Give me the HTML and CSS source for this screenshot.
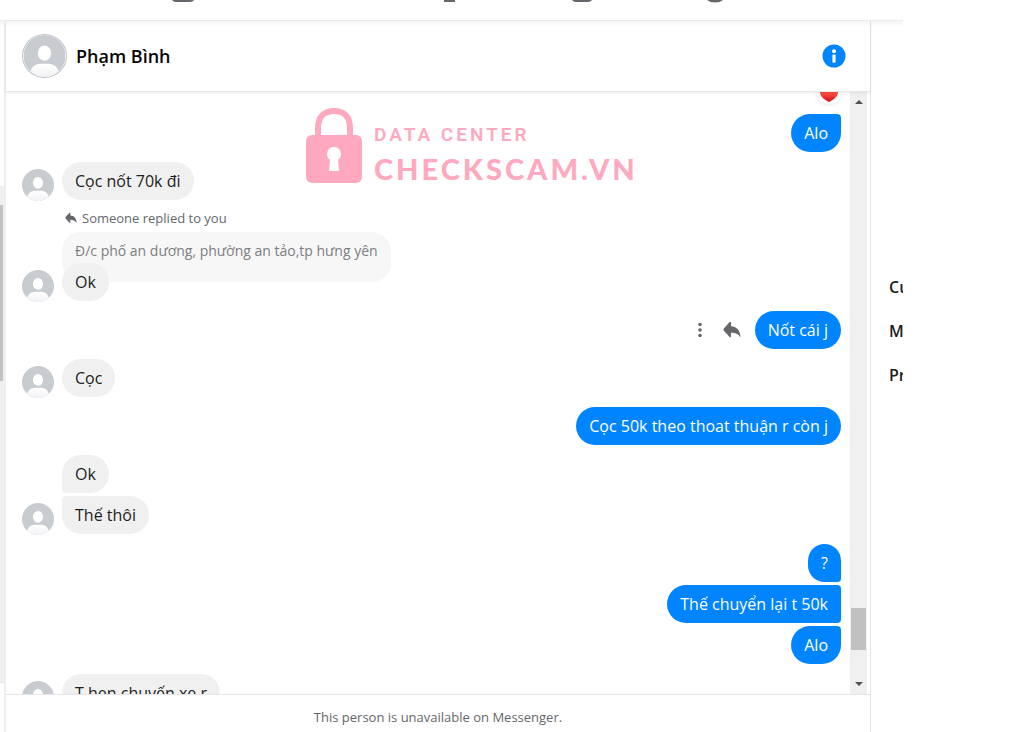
FILE: index.html
```html
<!DOCTYPE html>
<html lang="vi">
<head>
    <meta charset="UTF-8">
    <meta name="viewport" content="width=device-width, initial-scale=1.0">
    <title>Messenger</title>
    <link rel="stylesheet" href="styles.css">
</head>
<body>
    <svg class="symbols" aria-hidden="true">
        <defs>
            <linearGradient id="shoulders" x1="0" y1="0" x2="0" y2="1">
                <stop offset="0" stop-color="#fff"/>
                <stop offset="1" stop-color="#eff0f3"/>
            </linearGradient>
            <linearGradient id="heart" x1="0" y1="0" x2="0" y2="1">
                <stop offset="0.4" stop-color="#fb4a3f"/>
                <stop offset="1" stop-color="#d00f1c"/>
            </linearGradient>
            <clipPath id="round"><circle cx="22" cy="22" r="22"/></clipPath>
            <symbol id="person" viewBox="0 0 44 44">
                <g clip-path="url(#round)">
                    <rect width="44" height="44" fill="#c8cbd0"/>
                    <ellipse cx="22" cy="19" rx="7" ry="8" fill="#fff"/>
                    <path d="M6 46c0-10 4-16 12-16h8c8 0 12 6 12 16z" fill="url(#shoulders)"/>
                </g>
            </symbol>
            <symbol id="reply" viewBox="0 0 18 18">
                <path d="M8 1.600v3.600c6 .3 9.400 4.400 9.500 11.400-1.600-3-4.500-4.900-9.500-4.900v3.700c0 .8-.8 1.100-1.400.6L.9 9.700c-.6-.6-.6-1.600 0-2.200L6.600 1c.6-.6 1.400-.2 1.400.6z"/>
            </symbol>
        </defs>
    </svg>

    <nav class="top-nav">
        <a href="#" aria-label="Home"><svg width="24" height="3"><path d="M1 0h22q-1 2-4 2H5Q2 2 1 0z"/></svg></a>
        <a href="#" aria-label="Friends"></a>
        <a href="#" aria-label="Watch"><svg width="24" height="3"><path d="M7 0h11v2H7z"/></svg></a>
        <a href="#" aria-label="Marketplace"><svg width="24" height="3"><path d="M2 0h20q-1 2-4 2H6Q3 2 2 0z"/></svg></a>
        <a href="#" aria-label="Groups"><svg width="24" height="3"><path d="M4 0h16q-3 2.500-8 2.500T4 0z"/></svg></a>
    </nav>

    <div class="layout">
        <aside class="chat-list">
            <div class="list-track"><div class="list-thumb"></div></div>
        </aside>

        <main class="chat">
            <header class="chat-header">
                <svg class="avatar-large"><use href="#person"/></svg>
                <h1>Phạm Bình</h1>
                <button class="info-btn" type="button" aria-label="Info">
                    <svg width="24" height="24" viewBox="0 0 24 24">
                        <circle cx="12" cy="12" r="11.500" fill="#0084ff"/>
                        <circle cx="12" cy="7.200" r="2" fill="#fff"/>
                        <rect x="10.400" y="10.500" width="3.200" height="8.300" rx="1" fill="#fff"/>
                    </svg>
                </button>
            </header>

            <div class="chat-body">
                <div class="messages">
                    <div class="reaction">
                        <svg width="18" height="16" viewBox="0 0 16 16" preserveAspectRatio="none"><path d="M8 15C3.500 12.500 0 9.500 0 4.800 0 .5 6 .2 8 3.600 10 .2 16 .5 16 4.800 16 9.500 12.500 12.500 8 15z" fill="url(#heart)"/></svg>
                    </div>

                    <div class="group sent">
                        <p class="bubble last">Alo</p>
                    </div>

                    <div class="group received">
                        <svg class="avatar"><use href="#person"/></svg>
                        <p class="bubble">Cọc nốt 70k đi</p>
                    </div>

                    <div class="group received">
                        <svg class="avatar"><use href="#person"/></svg>
                        <div class="reply-label"><svg width="12" height="12"><use href="#reply"/></svg>Someone replied to you</div>
                        <p class="quote">Đ/c phố an dương, phường an tảo,tp hưng yên</p>
                        <p class="bubble over-quote">Ok</p>
                    </div>

                    <div class="group sent">
                        <div class="with-actions">
                            <button type="button" aria-label="More"><svg width="4" height="16"><circle cx="2" cy="2.500" r="1.800"/><circle cx="2" cy="8" r="1.800"/><circle cx="2" cy="13.500" r="1.800"/></svg></button>
                            <button type="button" aria-label="Reply"><svg width="18" height="18"><use href="#reply"/></svg></button>
                            <p class="bubble">Nốt cái j</p>
                        </div>
                    </div>

                    <div class="group received">
                        <svg class="avatar"><use href="#person"/></svg>
                        <p class="bubble">Cọc</p>
                    </div>

                    <div class="group sent">
                        <p class="bubble">Cọc 50k theo thoat thuận r còn j</p>
                    </div>

                    <div class="group received">
                        <svg class="avatar"><use href="#person"/></svg>
                        <p class="bubble first">Ok</p>
                        <p class="bubble last">Thế thôi</p>
                    </div>

                    <div class="group sent">
                        <p class="bubble first">?</p>
                        <p class="bubble first last">Thế chuyển lại t 50k</p>
                        <p class="bubble last">Alo</p>
                    </div>

                    <div class="group received">
                        <svg class="avatar"><use href="#person"/></svg>
                        <p class="bubble">T hẹn chuyến xe r</p>
                    </div>
                </div>

                <div class="scrollbar">
                    <svg width="8" height="4"><path d="M4 0l4 4H0z"/></svg>
                    <div class="track"><div class="thumb"></div></div>
                    <svg width="8" height="4"><path d="M0 0h8L4 4z"/></svg>
                </div>

                <div class="watermark">
                    <svg width="56" height="76" viewBox="0 0 56 76">
                        <path d="M12 32V20C12 8 19 3 28 3s16 5 16 17v12" fill="none" stroke="#ffa9c0" stroke-width="6"/>
                        <rect y="27" width="56" height="48" rx="6" fill="#ffa9c0"/>
                        <path d="M28 39a7 7 0 0 1 4 12.700L33 63H23l1-11.300A7 7 0 0 1 28 39z" fill="#fff"/>
                    </svg>
                    <div>
                        <div class="mark-small">DATA CENTER</div>
                        <div class="mark-big">CHECKSCAM.VN</div>
                    </div>
                </div>
            </div>

            <footer class="chat-footer">This person is unavailable on Messenger.</footer>
        </main>

        <aside class="details">
            <a href="#">Cu</a>
            <a href="#">M</a>
            <a href="#">Pr</a>
        </aside>
    </div>
</body>
</html>
```
FILE: styles.css
```css
* {
    box-sizing: border-box;
}
body {
    font-family: "Open Sans", "Noto Sans", sans-serif;
    font-size: 16px;
    color: #1c1e21;
    background: white;
    margin: 0;
    padding-right: 121px;
    height: 100vh;
    display: flex;
    flex-direction: column;
    overflow: hidden;
}
h1, p {
    margin: 0;
}
svg {
    display: block;
    flex-shrink: 0;
}
button {
    border: none;
    background: none;
    padding: 0;
    cursor: pointer;
}
.symbols {
    position: absolute;
    width: 0;
    height: 0;
}

/* top navigation */
.top-nav {
    flex: 0 0 20px;
    display: flex;
    padding-left: 116px;
    fill: #65676b;
}
.top-nav a {
    width: 133px;
    display: flex;
    justify-content: center;
}
.layout {
    flex: 1;
    min-height: 0;
    display: grid;
    grid-template-columns: 6px 1fr 32px;
    border-top: 1px solid #ececec;
    background: linear-gradient(#f5f5f5, white 6px);
}

/* left list edge */
.chat-list {
    border-right: 2px solid #eeeeee;
    padding-top: 165px;
    padding-bottom: 49px;
}
.list-track {
    height: 100%;
    background: #f0f0f0;
    border-bottom: 1px solid #e4e4e4;
    padding-top: 19px;
}
.list-thumb {
    width: 3px;
    height: 37%;
    background: #c1c1c1;
}

/* conversation */
.chat {
    display: flex;
    flex-direction: column;
    min-width: 0;
    min-height: 0;
    border-right: 1px solid #e5e5e5;
}
.chat-header {
    display: flex;
    align-items: center;
    gap: 9px;
    padding: 13px 24px 13px 16px;
    border-bottom: 1px solid #e8e8e8;
    box-shadow: 0 1px 3px rgba(0, 0, 0, 0.08);
    z-index: 1;
}
.avatar-large {
    width: 45px;
    height: 44px;
    border: 1px solid #bfc2c7;
    border-radius: 50%;
}
.chat-header h1 {
    font-size: 18px;
    font-weight: 600;
    line-height: 24px;
    color: #050505;
}
.info-btn {
    margin-left: auto;
}
.chat-body {
    flex: 1;
    min-height: 0;
    display: flex;
    position: relative;
}
.messages {
    flex: 1;
    display: flex;
    flex-direction: column;
    gap: 10px;
    padding: 22px 9px 0 56px;
    overflow: hidden;
    position: relative;
}
.group {
    display: flex;
    flex-direction: column;
    gap: 3px;
    position: relative;
}
.received {
    align-items: flex-start;
}
.sent {
    align-items: flex-end;
}
.bubble {
    padding: 8px 13px;
    line-height: 22px;
    border-radius: 19px;
    white-space: nowrap;
}
.received .bubble {
    background: #f0f0f0;
}
.sent .bubble {
    background: #0084ff;
    color: white;
}
.received .first {
    border-bottom-left-radius: 4px;
}
.received .last {
    border-top-left-radius: 4px;
}
.sent .first {
    border-bottom-right-radius: 4px;
}
.sent .last {
    border-top-right-radius: 4px;
}
.avatar {
    position: absolute;
    left: -40px;
    bottom: -1px;
    width: 32px;
    height: 32px;
}
.reply-label {
    display: flex;
    align-items: center;
    gap: 5px;
    padding-left: 3px;
    font-size: 13px;
    line-height: 16px;
    color: #65676b;
    fill: #65676b;
}
.quote {
    margin-top: 3px;
    padding: 10px 13px 22px;
    font-size: 14px;
    line-height: 18px;
    color: #7c7e81;
    background: #f7f7f7;
    border-radius: 19px;
}
.over-quote {
    margin-top: -22px;
}
.with-actions {
    display: flex;
    align-items: center;
    gap: 14px;
    fill: #65676b;
}
.with-actions button:first-child {
    margin-right: 7px;
}
.reaction {
    position: absolute;
    top: -9px;
    right: 9px;
    padding: 4px 3px 1px;
    background: white;
    border-radius: 50%;
    box-shadow: 0 1px 4px rgba(0, 0, 0, 0.1);
}
.scrollbar {
    width: 17px;
    margin-right: 3px;
    padding: 8px 0;
    display: flex;
    flex-direction: column;
    align-items: center;
    gap: 5px;
    background: #f0f0f0;
    fill: #505050;
}
.track {
    flex: 1;
    display: flex;
    align-items: flex-end;
    padding-bottom: 27px;
}
.thumb {
    width: 15px;
    height: 42px;
    background: #c1c1c1;
}

/* logo laid over the messages */
.watermark {
    position: absolute;
    top: 16px;
    left: 300px;
    display: flex;
    gap: 12px;
    color: #ffa9c0;
    white-space: nowrap;
}
.mark-small {
    font: 600 19px/24px Roboto, sans-serif;
    letter-spacing: 3px;
    margin-top: 15px;
}
.mark-big {
    font: 900 29px/36px Lato, sans-serif;
    letter-spacing: 3px;
    margin-top: 4px;
}
.chat-footer {
    border-top: 1px solid #e5e5e5;
    padding: 12px 0 5px;
    font-size: 13px;
    line-height: 20px;
    text-align: center;
    color: #65676b;
}

/* right column */
.details {
    display: flex;
    flex-direction: column;
    gap: 20px;
    padding: 254px 0 0 18px;
    overflow: hidden;
}
.details a {
    font-weight: 600;
    line-height: 24px;
    color: #1c1e21;
    text-decoration: none;
}
```
